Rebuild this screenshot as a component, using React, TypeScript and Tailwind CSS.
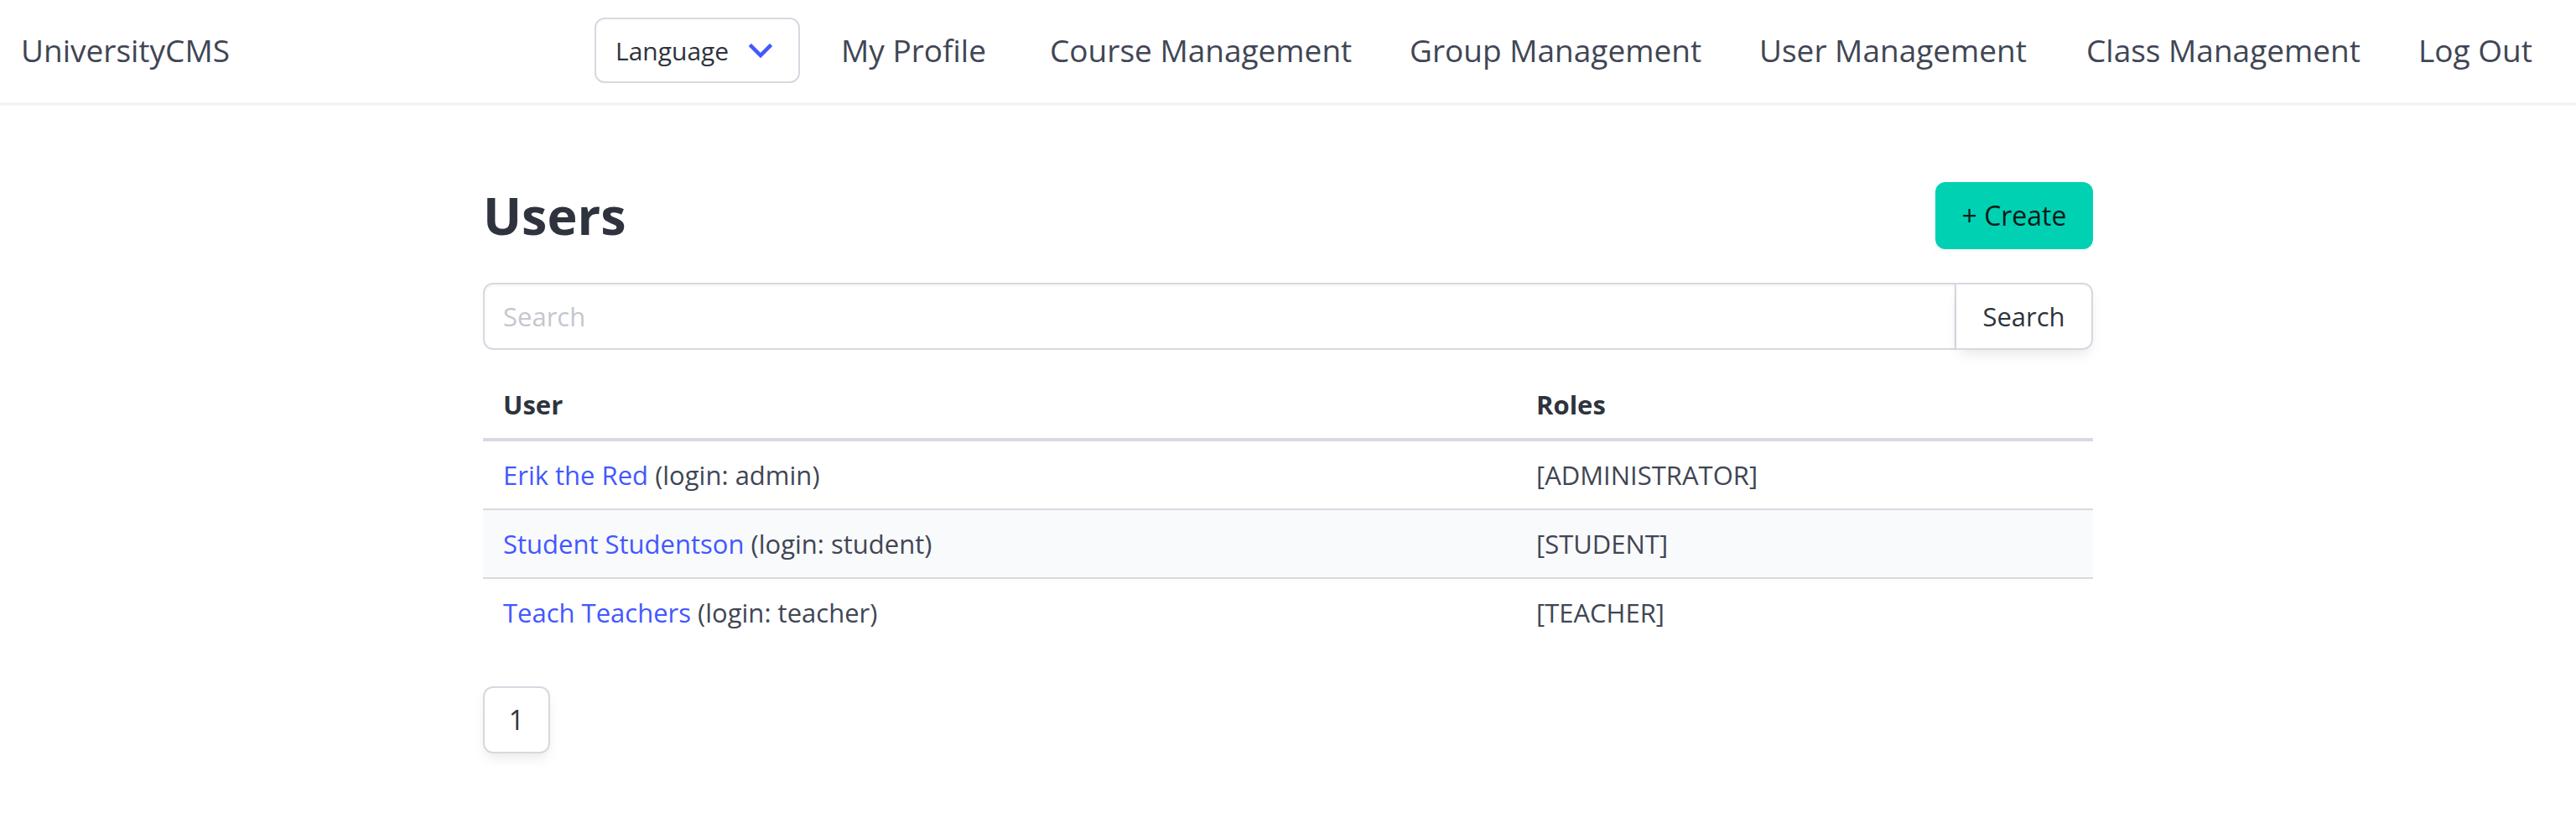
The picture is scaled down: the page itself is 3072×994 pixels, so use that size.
const navLinks = [
  { label: 'My Profile', width: 'w-[249px]' },
  { label: 'Course Management', width: 'w-[429px]' },
  { label: 'Group Management', width: 'w-[417px]' },
  { label: 'User Management', width: 'w-[390px]' },
  { label: 'Class Management', width: 'w-[396px]' },
  { label: 'Log Out', width: 'w-[188px]' },
];

const users = [
  { name: 'Erik the Red', login: 'admin', roles: '[ADMINISTRATOR]' },
  { name: 'Student Studentson', login: 'student', roles: '[STUDENT]' },
  { name: 'Teach Teachers', login: 'teacher', roles: '[TEACHER]' },
];

export default function App() {
  return (
    <div className="min-h-screen bg-white font-['Open_Sans',sans-serif] text-[#404654]">
      <nav className="h-[126px] flex items-center border-b-4 border-[#f3f4f6] pb-[2px]">
        <div className="w-[709px] shrink-0 pl-[25px]">
          <a className="text-[37px] text-[#404654]">UniversityCMS</a>
        </div>
        <div className="flex items-center">
          <div className="w-[245px] h-[78px] border-2 border-[#d6d9e0] rounded-[12px] flex items-center pl-[23px] pr-[31px] justify-between">
            <span className="text-[30px] text-[#2e333d]">Language</span>
            <svg width="28" height="18" viewBox="0 0 28 18" fill="none" className="mt-[2px]">
              <polyline points="3,3 14,14 25,3" stroke="#4258ff" strokeWidth="4.5" strokeLinecap="square" />
            </svg>
          </div>
          <div className="ml-[49px] flex items-center">
            {navLinks.map((l) => (
              <a key={l.label} className={`${l.width} text-[37px] text-[#404654] whitespace-nowrap`}>
                {l.label}
              </a>
            ))}
          </div>
        </div>
      </nav>

      <main className="w-[1920px] mx-auto pt-[91px]">
        <div className="h-[80px] flex items-center justify-between">
          <h1 className="text-[61px] font-bold leading-[72px] text-[#2e333d]">Users</h1>
          <button className="h-[80px] w-[188px] rounded-[12px] bg-[#00d1b2] text-[32px] text-[#0f1a18]">
            + Create
          </button>
        </div>

        <div className="mt-[40px] flex h-[80px]">
          <input
            placeholder="Search"
            className="flex-1 h-full border-2 border-[#d6d9e0] rounded-l-[12px] px-[22px] text-[31px] placeholder:text-[#c4c7ce] shadow-[inset_0_1px_4px_rgba(10,10,10,0.05)] outline-none"
          />
          <button className="w-[163px] h-full border-2 border-l-0 border-[#d6d9e0] rounded-r-[12px] text-[31px] text-[#2e333d] shadow-[0_8px_16px_-4px_rgba(10,10,10,0.1)]">
            Search
          </button>
        </div>

        <table className="mt-[25px] w-full border-collapse text-[31px] leading-[48px]">
          <thead>
            <tr className="border-b-4 border-[#d6d9e0]">
              <th className="w-[1232px] text-left font-bold text-[#2e333d] px-[24px] py-[16px]">User</th>
              <th className="text-left font-bold text-[#2e333d] px-[24px] py-[16px]">Roles</th>
            </tr>
          </thead>
          <tbody>
            {users.map((u, i) => (
              <tr
                key={u.login}
                className={`${i < users.length - 1 ? 'border-b-2 border-[#d6d9e0]' : ''} ${i % 2 === 1 ? 'bg-[#f9fafb]' : ''}`}
              >
                <td className="px-[24px] py-[16px]">
                  <a className="text-[#4258ff]">{u.name}</a> (login: {u.login})
                </td>
                <td className="px-[24px] py-[16px]">{u.roles}</td>
              </tr>
            ))}
          </tbody>
        </table>

        <div className="mt-[48px] flex">
          <a className="w-[80px] h-[80px] flex items-center justify-center border-2 border-[#d6d9e0] rounded-[12px] text-[32px] text-[#2e333d] shadow-[0_8px_16px_-4px_rgba(10,10,10,0.1)]">
            1
          </a>
        </div>
      </main>
    </div>
  );
}
